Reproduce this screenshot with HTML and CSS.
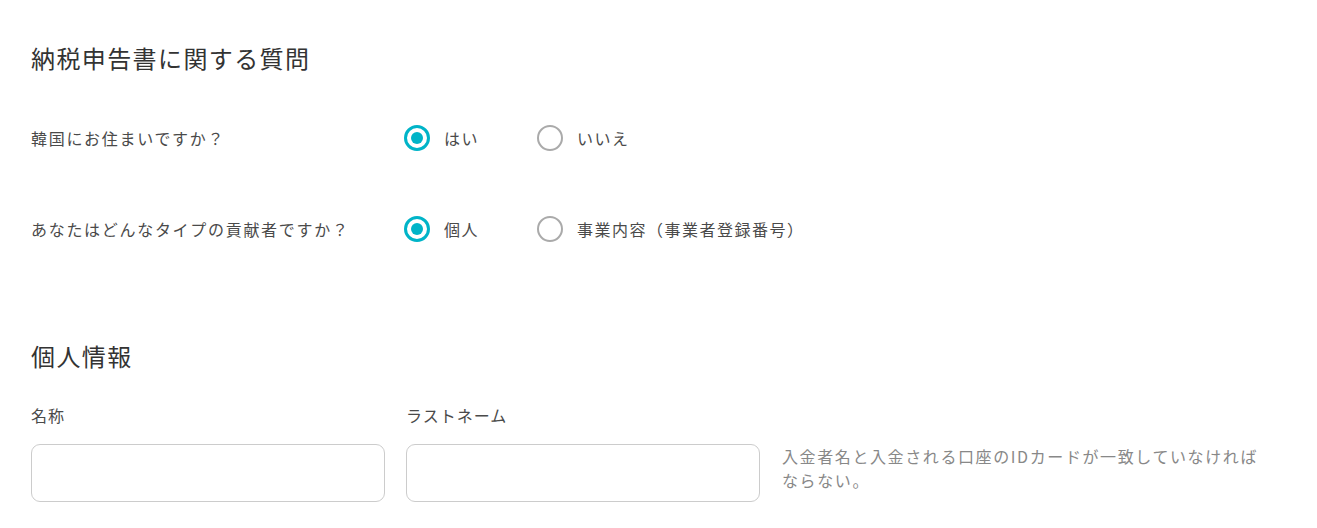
FILE: index.html
```html
<!DOCTYPE html>
<html lang="ja">
<head>
<meta charset="utf-8">
<link rel="stylesheet" href="styles.css">
</head>
<body>
<div class="page">
  <section class="tax">
    <h2 class="title">納税申告書に関する質問</h2>
    <div class="q-row">
      <div class="q-label">韓国にお住まいですか？</div>
      <div class="options">
        <label class="opt"><span class="radio checked"></span><span class="opt-text">はい</span></label>
        <label class="opt"><span class="radio"></span><span class="opt-text">いいえ</span></label>
      </div>
    </div>
    <div class="q-row">
      <div class="q-label">あなたはどんなタイプの貢献者ですか？</div>
      <div class="options">
        <label class="opt"><span class="radio checked"></span><span class="opt-text">個人</span></label>
        <label class="opt"><span class="radio"></span><span class="opt-text">事業内容（事業者登録番号）</span></label>
      </div>
    </div>
  </section>
  <section class="personal">
    <h2 class="title">個人情報</h2>
    <div class="fields">
      <div class="field">
        <div class="f-label">名称</div>
        <input class="f-input" type="text">
      </div>
      <div class="field">
        <div class="f-label">ラストネーム</div>
        <input class="f-input" type="text">
      </div>
      <p class="hint">入金者名と入金される口座のIDカードが一致していなければならない。</p>
    </div>
  </section>
</div>
</body>
</html>
```

FILE: styles.css
```css
* { box-sizing: border-box; }
html, body { margin: 0; padding: 0; background: #fff; }
body {
  font-family: "Noto Sans CJK JP", "Noto Sans", sans-serif;
  color: #4a4a4a;
}
.page {
  padding: 40px 31px 0 31px;
}
.title {
  margin: 0;
  font-size: 24px;
  font-weight: 400;
  letter-spacing: 1.4px;
  line-height: 36px;
  color: #333;
}
.tax .title { margin-bottom: 45px; }
.q-row {
  display: flex;
  align-items: center;
  height: 34px;
  margin-bottom: 57px;
}
.q-row:last-child { margin-bottom: 0; }
.q-label {
  width: 373px;
  font-size: 16px;
  letter-spacing: 1.7px;
  color: #4a4a4a;
}
.options {
  display: flex;
  align-items: center;
  gap: 58px;
}
.opt {
  display: flex;
  align-items: center;
  gap: 14px;
  font-size: 16px;
  letter-spacing: 1.5px;
  color: #4a4a4a;
}
.radio {
  width: 26px;
  height: 26px;
  border-radius: 50%;
  border: 2px solid #aaa;
  display: inline-block;
  position: relative;
}
.radio.checked {
  border: 3px solid #00b4c8;
}
.radio.checked::after {
  content: "";
  position: absolute;
  left: 50%;
  top: 50%;
  width: 12px;
  height: 12px;
  margin: -6px 0 0 -6px;
  border-radius: 50%;
  background: #00b4c8;
}
.personal { margin-top: 92px; }
.personal .title { margin-bottom: 29px; }
.fields {
  display: flex;
  align-items: flex-start;
  gap: 21px;
}
.field {
  width: 354px;
}
.f-label {
  font-size: 16px;
  letter-spacing: 1px;
  line-height: 24px;
  margin-bottom: 17px;
  color: #4a4a4a;
}
.f-input {
  width: 354px;
  height: 58px;
  border: 1px solid #ccc;
  border-radius: 9px;
  outline: none;
  background: #fff;
}
.hint {
  margin: 41px 0 0 1px;
  width: 486px;
  font-size: 16px;
  letter-spacing: 1.6px;
  line-height: 24px;
  color: #888;
}
```
